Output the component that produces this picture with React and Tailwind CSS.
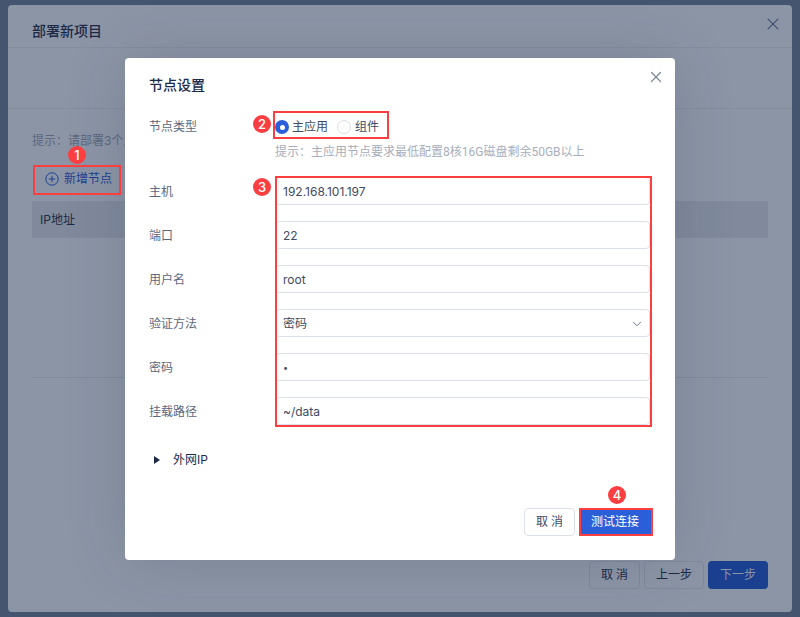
import React from 'react';
import { ChevronDown, X } from 'lucide-react';

const fields = [
  { label: '主机', value: '192.168.101.197' },
  { label: '端口', value: '22' },
  { label: '用户名', value: 'root' },
  { label: '验证方法', value: '密码', select: true },
  { label: '密码', value: '•', small: true },
  { label: '挂载路径', value: '~/data' },
];

const Badge = ({ n, className }) => (
  <span className={`absolute flex h-[18px] w-[18px] items-center justify-center rounded-full bg-[#fb3f41] text-[13px] leading-none font-medium text-white ${className}`}>
    {n}
  </span>
);

const Background = () => (
  <div className="flex h-[607px] flex-col rounded bg-[#8c95a6]">
    <div className="flex h-[43px] justify-between border-b border-[#848d9f] pl-6 pr-[9px]">
      <span className="mt-[16px] text-sm leading-5 font-medium text-[#1c2a47]">部署新项目</span>
      <X size={20} strokeWidth={1.3} className="mt-[9px] text-[#465570]" />
    </div>
    <div className="h-[61px] border-b border-[#848d9f]" />
    <div className="flex grow flex-col px-6">
      <div className="mt-[24px] text-xs leading-4 text-[#5c677d]">提示：请部署3个主应用节点</div>
      <div className="mt-[21px] flex items-center gap-[5px] pl-[13px] text-xs leading-[18px] text-[#1d3f94]">
        <svg width="14" height="14" viewBox="0 0 14 14" fill="none" stroke="currentColor" strokeWidth="1">
          <circle cx="7" cy="7" r="6.2" />
          <path d="M7 3.8v6.4M3.8 7h6.4" />
        </svg>
        新增节点
      </div>
      <div className="mt-[13px] flex h-[37px] items-center justify-between bg-[#808a9c] pl-2 pr-[70px] text-xs text-[#1c2a47]">
        <span>IP地址</span>
        <span className="h-[18px] w-px bg-[#858fa1]" />
      </div>
      <div className="mt-[139px] h-px bg-[#7f899b]" />
      <div className="mt-auto mb-[23px] flex justify-end gap-1 text-xs">
        <div className="flex h-7 w-[51px] items-center justify-center rounded border border-[#7f899b] pl-[3px] tracking-[3px] text-[#1c2a47]">取消</div>
        <div className="flex h-7 w-[60px] items-center justify-center rounded border border-[#7f899b] text-[#1c2a47]">上一步</div>
        <div className="flex h-7 w-[60px] items-center justify-center rounded bg-[#1b408f] text-[#8c95a6]">下一步</div>
      </div>
    </div>
  </div>
);

const Modal = () => (
  <div className="absolute left-[125px] top-[58px] flex h-[502px] w-[550px] flex-col rounded bg-white pl-6 pr-[25px] shadow-[0_0_60px_rgba(40,50,70,0.18)]">
    <X size={18} strokeWidth={1.6} className="absolute right-[10px] top-[10px] text-[#7e889b]" />
    <h2 className="mt-[18px] text-sm leading-[18px] font-medium text-[#1c2a47]">节点设置</h2>
    <div className="mt-[24px] flex text-xs">
      <div className="w-[126px] leading-[18px] text-[#5c677d]">节点类型</div>
      <div>
        <div className="flex h-[18px] items-center text-[#3d4a63]">
          <span className="flex h-[14px] w-[14px] items-center justify-center rounded-full bg-[#2b5fd9]">
            <span className="h-[5px] w-[5px] rounded-full bg-white" />
          </span>
          <span className="ml-[3px]">主应用</span>
          <span className="ml-[9px] h-[14px] w-[14px] rounded-full border border-[#d9dee8]" />
          <span className="ml-[4px]">组件</span>
        </div>
        <div className="mt-[8px] font-['Roboto','Noto_Sans_CJK_SC',sans-serif] leading-4 text-[#a7aebb]">提示：主应用节点要求最低配置8核16G磁盘剩余50GB以上</div>
      </div>
    </div>
    <div className="mt-[17px] flex flex-col gap-4 text-xs">
      {fields.map(f => (
        <div key={f.label} className="flex items-center">
          <div className="w-[126px] pt-px text-[#5c677d]">{f.label}</div>
          <div className="flex h-7 w-[375px] items-center justify-between rounded border border-[#dce0e9] px-[7px] pt-px text-[#3d4a63]">
            <span className={f.small ? 'text-[9px]' : ''}>{f.value}</span>
            {f.select && <ChevronDown size={14} strokeWidth={1.4} className="mr-[-2px] text-[#465570]" />}
          </div>
        </div>
      ))}
    </div>
    <div className="mt-[27px] flex items-center text-xs text-[#1c2a47]">
      <svg width="6" height="8" viewBox="0 0 6 8" className="ml-[5px] mr-[13px]" fill="currentColor"><path d="M0 0l6 4-6 4z" /></svg>
      外网IP
    </div>
    <div className="mt-auto mb-[24px] mr-[-2px] flex justify-end gap-[5px] text-xs">
      <div className="flex h-7 w-[51px] items-center justify-center rounded border border-[#dce0e9] pl-[3px] tracking-[3px] text-[#3d4a63]">取消</div>
      <div className="flex h-7 w-[72px] items-center justify-center bg-[#2b5fd9] pr-[2px] text-white">测试连接</div>
    </div>
  </div>
);

export default function App() {
  return (
    <div className="relative h-[617px] w-[800px] overflow-hidden bg-[#46556f] px-2 pt-[5px] font-['Inter','Noto_Sans_CJK_SC',sans-serif]">
      <Background />
      <Modal />
      {/* annotations */}
      <div className="absolute left-[33px] top-[165px] h-[30px] w-[88px] border-2 border-[#fb3f41]" />
      <div className="absolute left-[273px] top-[111px] h-[28px] w-[116px] border-2 border-[#fb3f41]" />
      <div className="absolute left-[275px] top-[176px] h-[251px] w-[377px] border-2 border-[#fb3f41]" />
      <div className="absolute left-[579px] top-[508px] h-[28px] w-[74px] border-2 border-[#fb3f41]" />
      <Badge n="1" className="left-[68px] top-[146px]" />
      <Badge n="2" className="left-[253px] top-[115px]" />
      <Badge n="3" className="left-[253px] top-[178px]" />
      <Badge n="4" className="left-[608px] top-[486px]" />
    </div>
  );
}
